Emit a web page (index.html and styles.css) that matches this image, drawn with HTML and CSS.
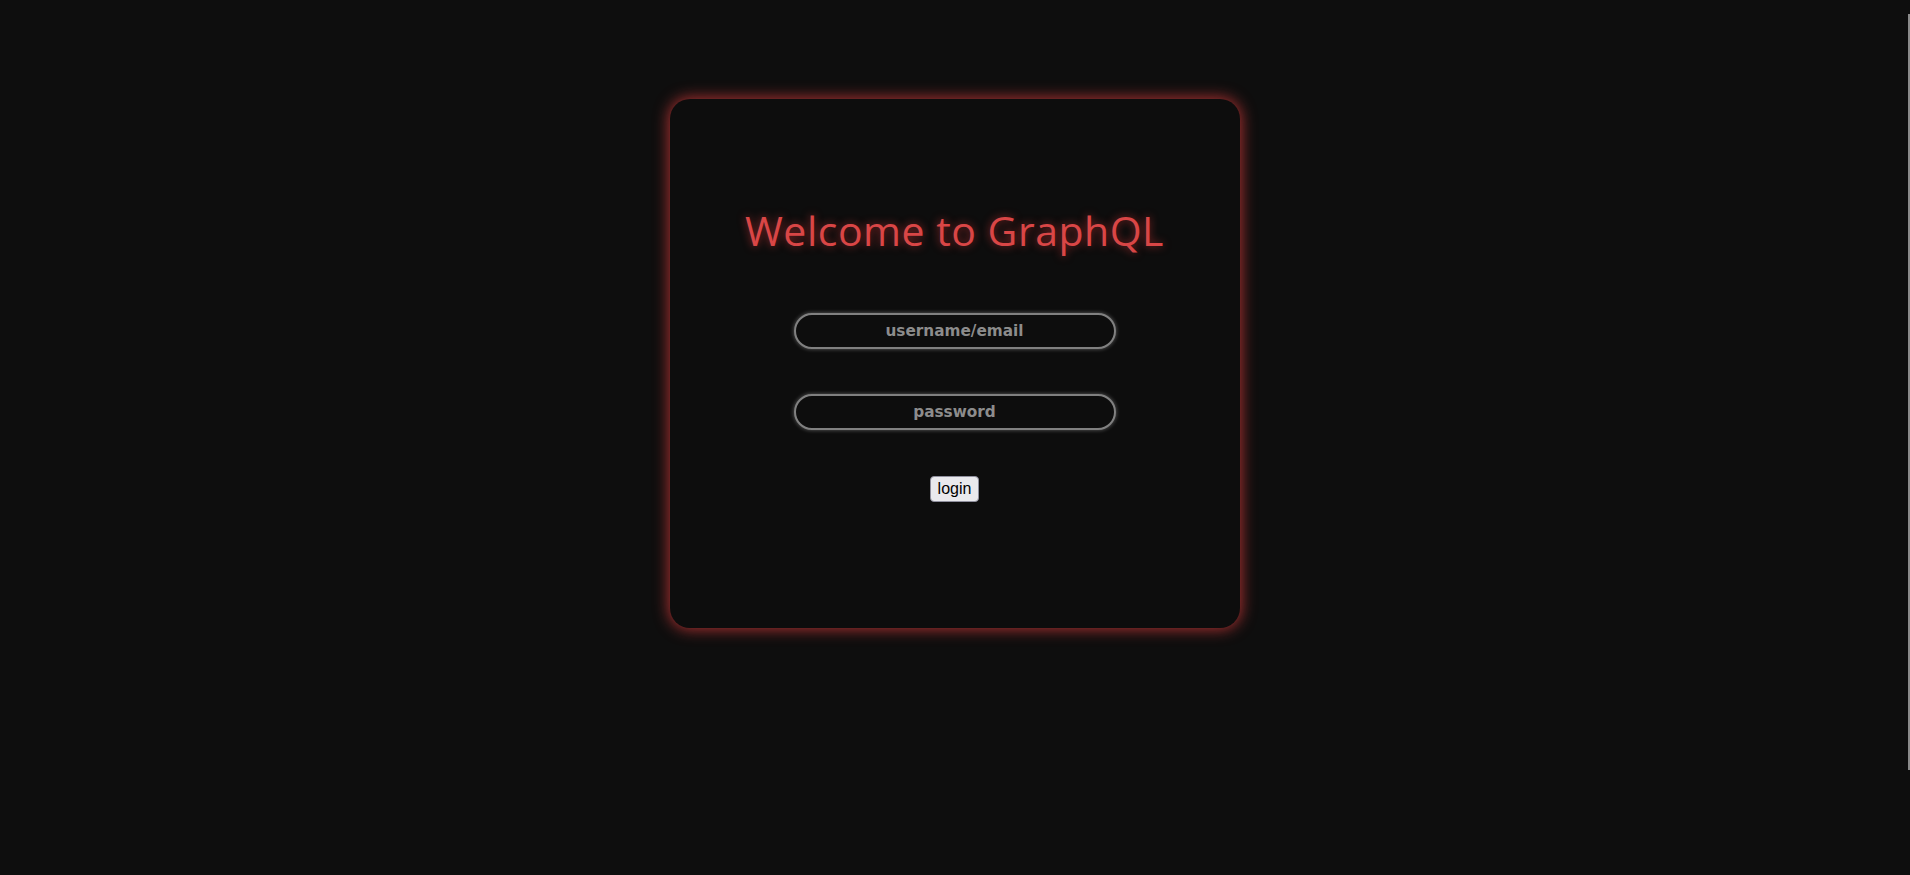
FILE: index.html
```html
<!DOCTYPE html>
<html lang="en">
<head>
<meta charset="utf-8">
<title>GraphQL Login</title>
<link rel="stylesheet" href="styles.css">
</head>
<body>
<main class="page">
  <section class="card">
    <h1 class="title">Welcome to GraphQL</h1>
    <form class="login-form">
      <input class="field field-user" type="text" placeholder="username/email">
      <input class="field field-pass" type="password" placeholder="password">
      <button class="login-btn" type="button">login</button>
    </form>
  </section>
</main>
<div class="edge-line"></div>
</body>
</html>
```

FILE: styles.css
```css
html {
  background: #0e0e0e;
}
body {
  margin: 0;
  background: #0e0e0e;
  min-height: 875px;
}
.page {
  display: flex;
  justify-content: center;
  padding-top: 99px;
}
.card {
  box-sizing: border-box;
  width: 570px;
  height: 529px;
  margin-left: -1px;
  padding-top: 104px;
  background: #0d0d0d;
  border-radius: 20px;
  box-shadow: 0 0 15px 1px rgba(220, 60, 60, 0.8);
  display: flex;
  flex-direction: column;
  align-items: center;
}
.title {
  margin: 0;
  font-family: "Open Sans", "Noto Sans", sans-serif;
  font-weight: 400;
  font-size: 41px;
  letter-spacing: 0.5px;
  line-height: 54px;
  color: #d94646;
  text-shadow: 0 0 8px rgba(255, 60, 60, 0.55);
}
.login-form {
  display: flex;
  flex-direction: column;
  align-items: center;
  margin-top: 56px;
}
.field {
  box-sizing: border-box;
  width: 322px;
  height: 36px;
  padding: 0 16px;
  background: #0d0d0d;
  border: 2px solid #808080;
  border-radius: 18px;
  box-shadow: 0 0 4px rgba(255, 255, 255, 0.35);
  outline: none;
  text-align: center;
  font-family: "DejaVu Sans", Verdana, sans-serif;
  font-weight: 700;
  font-size: 15.3px;
  color: #ccc;
}
.field::placeholder {
  color: #8c8c8c;
  opacity: 1;
}
.field-pass {
  margin-top: 45px;
}
.login-btn {
  margin-top: 46px;
  font-family: "Liberation Sans", Arial, sans-serif;
  font-size: 16px;
  line-height: 20px;
  padding: 2px 7px;
  color: #000;
  background: #e9e9ed;
  border: 1px solid #8f8f9d;
  border-radius: 4px;
}
.edge-line {
  position: fixed;
  top: 14px;
  right: 0;
  width: 2px;
  height: 756px;
  background: #8a8a8a;
}
```
